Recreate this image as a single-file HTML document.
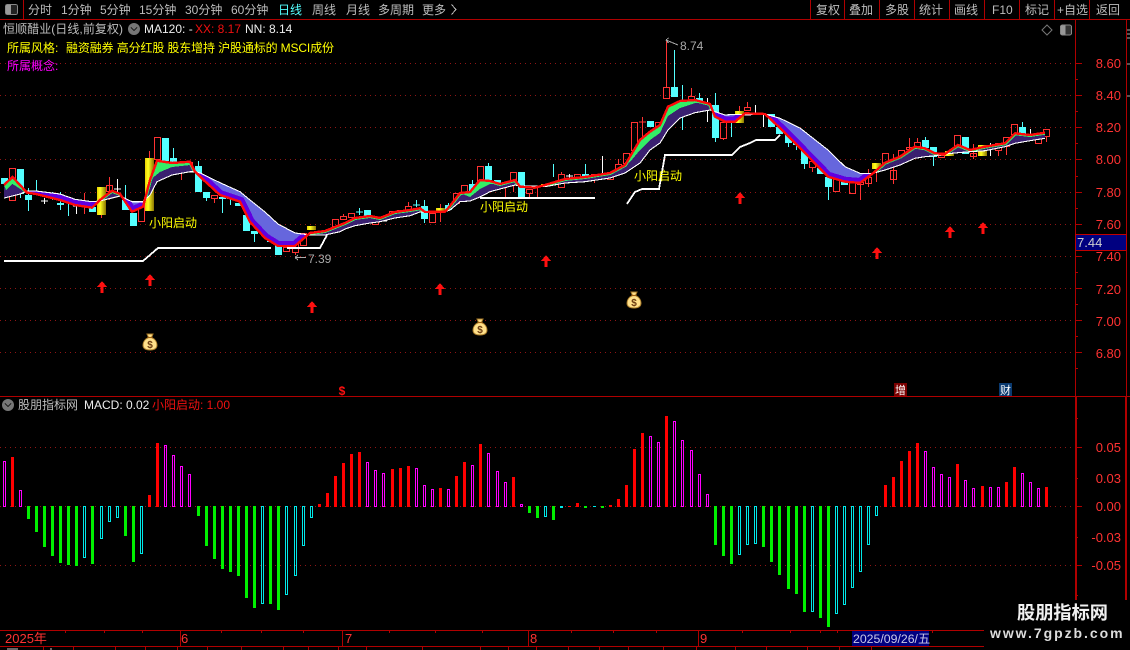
<!DOCTYPE html>
<html lang="zh">
<head>
<meta charset="utf-8">
<title>恒顺醋业</title>
<style>
html,body{margin:0;padding:0;background:#000;width:1130px;height:650px;overflow:hidden}
svg{display:block}
text{font-family:"Liberation Sans","Noto Sans CJK SC",sans-serif;font-size:12px}
.tb{fill:#bdbdbd}
.ax{fill:#ff3232;text-anchor:end;font-size:13px}
.lb{fill:#ffff00;font-size:12px}
.s{font-size:12px}
</style>
</head>
<body>
<svg width="1130" height="650" viewBox="0 0 1130 650" xmlns="http://www.w3.org/2000/svg" shape-rendering="crispEdges">
<defs>
<linearGradient id="yg" x1="0" x2="1" y1="0" y2="0"><stop offset="0" stop-color="#e8d000"/><stop offset=".35" stop-color="#ffff20"/><stop offset="1" stop-color="#8a7400"/></linearGradient>
<clipPath id="p"><polygon points="4,185 12.5,177 20,185 27,192.7 36,194 60,200 75,205 92,207.7 100,200 112,190.7 120,194 132,211.7 143,206.7 150,180 157,160.7 172,163 190,161.7 195,171.7 200,176.7 220,195 240,201.7 250,222 265,238 278,246 295,246 310,233 325,231 340,225 345,223 355,218 370,216 380,218 395,212 410,210 420,208.3 425,212 445,211.7 450,206 460,193 470,192 480,180 490,181 500,184 515,180 520,186.7 535,187.7 545,185 565,179 585,177 610,173 625,165 640,140 650,131.7 660,125 668,106.7 680,101 695,100 710,104 715,116.7 725,121.7 735,121.7 745,113.3 765,114 780,128 800,148 828,176.7 845,181.7 860,183 873,173.3 885,162.7 900,156.7 915,146.7 925,148.3 935,153.3 945,154 958,145 970,150 985,146.7 1005,143.3 1015,133.3 1030,135 1045,132.7 1045,138.3 1030,140.7 1015,143.3 1005,146.7 985,150.7 970,151.7 958,152.7 945,154 935,155.7 925,156.7 915,158.3 900,165 885,170 873,173.3 860,173.3 845,166.7 828,150 800,128 780,118.3 765,114 745,115 735,114.3 725,115 715,111.7 710,110 695,112.7 680,118 668,130 660,143 650,150 640,163 625,173 610,178 585,181.7 565,183 545,186.7 535,186 520,186 515,185 500,189 490,191.7 480,197 470,201 460,201.7 450,210 445,211.7 425,212 420,212 410,215.7 395,218 380,221.7 370,223 355,225.7 345,229 340,231.7 325,235 310,235 295,233 278,224 265,212 250,200 240,191.7 220,182.7 200,173 195,171.7 190,171.7 172,175 157,181.7 150,195 143,201.7 132,201.7 120,196 112,198 100,201 92,201.7 75,199.3 60,194 36,191 27,191 20,194 12.5,196 4,198"/></clipPath>
<clipPath id="bear"><path d="M27 0H100V400H27zM120 0H146V400H120zM195 0H310V400H195zM425 0H445V400H425zM520 0H545V400H520zM712 0H745V400H712zM765 0H873V400H765z"/></clipPath>
<polyline id="R" fill="none" points="4,185 12.5,177 20,185 27,192.7 36,194 60,200 75,205 92,207.7 100,200 112,190.7 120,194 132,211.7 143,206.7 150,180 157,160.7 172,163 190,161.7 195,171.7 200,176.7 220,195 240,201.7 250,222 265,238 278,246 295,246 310,233 325,231 340,225 345,223 355,218 370,216 380,218 395,212 410,210 420,208.3 425,212 445,211.7 450,206 460,193 470,192 480,180 490,181 500,184 515,180 520,186.7 535,187.7 545,185 565,179 585,177 610,173 625,165 640,140 650,131.7 660,125 668,106.7 680,101 695,100 710,104 715,116.7 725,121.7 735,121.7 745,113.3 765,114 780,128 800,148 828,176.7 845,181.7 860,183 873,173.3 885,162.7 900,156.7 915,146.7 925,148.3 935,153.3 945,154 958,145 970,150 985,146.7 1005,143.3 1015,133.3 1030,135 1045,132.7"/>
<path id="ar" d="M0 0L5 6H1.5V12H-1.5V6H-5z" fill="#ff1010"/>
<g id="bag" shape-rendering="geometricPrecision">
<path d="M-3 0H3L1.5 3.5C5 5 7 8 7 11C7 14.5 4 16 0 16C-4 16 -7 14.5 -7 11C-7 8 -5 5 -1.5 3.5z" fill="#ffe08a" stroke="#a87a28" stroke-width="1"/>
<path d="M-2.5 3.5H2.5" stroke="#a06010" stroke-width="1.2"/>
<text x="0" y="14" text-anchor="middle" style="font-size:10px;font-weight:bold" fill="#6a3a10">$</text>
</g>
</defs>

<rect width="1130" height="650" fill="#000"/>

<!-- grid -->
<path d="M0 63.5H1075M0 95.5H1075M0 127.5H1075M0 159.5H1075M0 192.5H1075M0 224.5H1075M0 256.5H1075M0 288.5H1075M0 320.5H1075M0 352.5H1075M0 447.5H1075M0 506.5H1075M0 565.5H1075" stroke="#8f1515" stroke-width="1" stroke-dasharray="1 4"/>

<!-- candle wicks -->
<g fill="none" stroke-width="1">
<path stroke="#54ffff" d="M20.5 194V198M28.5 188V211M36.5 180V192M52.5 192V200M60.5 192V210M68.5 203V216M125.5 185V200M173.5 148V158M198.5 161V166M206.5 198V201M222.5 199V213M230.5 199V205M254.5 234V242M359.5 208V215M356 212H363M416.5 200V207M413 205H420M424.5 200V223M448.5 203V205M472.5 180V184M488.5 163V166M553.5 164V177M585.5 164V174M674.5 50V87M682.5 85V130M699.5 93V98M715.5 93V142M731.5 122V137M788.5 143V147M796.5 140V150M804.5 164V169M820.5 166V168M828.5 187V200M925.5 137V140M933.5 157V166M1022.5 122V127"/>
<path stroke="#ff3232" d="M84.5 193V214M109.5 177V200M101.5 215V218M149.5 151V158M181.5 165V180M214.5 198V203M295.5 252V255M343.5 214V216M408.5 202V206M440.5 204V222M505.5 187V197M513.5 183V192M529.5 193V197M537.5 188V197M561.5 172V175M594.5 177V183M618.5 159V164M642.5 117V138M639 122H646M666.5 40V87M691.5 88V96M723.5 138V140M739.5 106V111M747.5 102V107M812.5 167V172M860.5 173V200M868.5 169V187M876.5 169V182M893.5 154V184M909.5 138V149M917.5 138V142M973.5 144V159M998.5 150V156M1006.5 146V155M1046.5 136V142M1014.5 134V137"/>
<path stroke="#fff" d="M44.5 198V204M41 201H48M76.5 203V214M73 206H80M117.5 179V192M114 189H121M262.5 230V237M259 233H266M380 221H387M569.5 174V178M566 176H573M602.5 156V175M707.5 98V122M755.5 105V115M763.5 115V127M990.5 143V156M1030.5 129V140"/>
</g>
<!-- cyan bodies -->
<path fill="none" stroke="#54ffff" stroke-width="7" d="M4.5 178V184M20.5 169V194M28.5 195V200M60.5 203V205M92.5 207V212M125.5 200V210M133.5 213V226M165.5 138V161M173.5 158V163M198.5 166V192M206.5 192V198M222.5 197V199M230.5 198V199M238.5 203V206M246.5 215V231M254.5 231V234M270.5 235V242M278.5 243V255M367.5 210V218M424.5 206V219M448.5 205V210M472.5 184V193M488.5 166V180M497.5 180V184M521.5 172V197M585.5 174V177M650.5 121V127M674.5 87V97M682.5 100V103M699.5 98V102M715.5 105V138M771.5 114V127M779.5 127V134M788.5 133V143M796.5 143V145M804.5 150V164M820.5 168V174M828.5 177V187M844.5 182V185M925.5 140V148M933.5 147V157M965.5 137V154M1022.5 127V135"/>
<!-- red hollow -->
<path fill="none" stroke="#ff3232" stroke-width="1" d="M9.5 168.5h6V200.5h-6zM81.5 203.5h6V206.5h-6zM106.5 185.5h6V191.5h-6zM138.5 203.5h6V221.5h-6zM154.5 137.5h6V159.5h-6zM178.5 162.5h6V165.5h-6zM186.5 162.5h6V168.5h-6zM211.5 195.5h6V198.5h-6zM283.5 247.5h6V251.5h-6zM292.5 243.5h6V252.5h-6zM300.5 233.5h6V245.5h-6zM332.5 219.5h6V226.5h-6zM340.5 216.5h6V219.5h-6zM348.5 213.5h6V217.5h-6zM372.5 221.5h6V224.5h-6zM389.5 211.5h6V216.5h-6zM397.5 210.5h6V212.5h-6zM405.5 206.5h6V210.5h-6zM429.5 213.5h6V222.5h-6zM453.5 193.5h6V203.5h-6zM461.5 185.5h6V193.5h-6zM477.5 166.5h6V182.5h-6zM510.5 172.5h6V183.5h-6zM526.5 189.5h6V193.5h-6zM558.5 174.5h6V187.5h-6zM574.5 174.5h6V177.5h-6zM591.5 174.5h6V177.5h-6zM607.5 172.5h6V179.5h-6zM615.5 164.5h6V170.5h-6zM623.5 153.5h6V163.5h-6zM631.5 122.5h6V150.5h-6zM655.5 122.5h6V127.5h-6zM663.5 87.5h6V98.5h-6zM688.5 96.5h6V100.5h-6zM720.5 122.5h6V138.5h-6zM744.5 107.5h6V110.5h-6zM809.5 161.5h6V167.5h-6zM833.5 179.5h6V191.5h-6zM849.5 182.5h6V193.5h-6zM857.5 182.5h6V184.5h-6zM865.5 177.5h6V183.5h-6zM882.5 153.5h6V163.5h-6zM890.5 170.5h6V179.5h-6zM898.5 150.5h6V157.5h-6zM906.5 147.5h6V149.5h-6zM914.5 142.5h6V147.5h-6zM938.5 155.5h6V157.5h-6zM954.5 135.5h6V146.5h-6zM970.5 153.5h6V156.5h-6zM995.5 143.5h6V150.5h-6zM1003.5 137.5h6V146.5h-6zM1011.5 124.5h6V134.5h-6zM1035.5 138.5h6V143.5h-6zM1043.5 129.5h6V136.5h-6z"/>
<!-- yellow bodies -->
<g fill="url(#yg)">
<rect x="97" y="187" width="9" height="28"/>
<rect x="145" y="158" width="9" height="53"/>
<rect x="307" y="226" width="9" height="4"/>
<rect x="436" y="208" width="9" height="3"/>
<rect x="541" y="184" width="9" height="2"/>
<rect x="735" y="111" width="9" height="12"/>
<rect x="872" y="163" width="9" height="6"/>
<rect x="945" y="151" width="9" height="5"/>
<rect x="978" y="145" width="9" height="3"/>
<rect x="978" y="151" width="9" height="5"/>
</g>

<!-- ribbon -->
<g clip-path="url(#p)">
<rect width="1075" height="400" fill="#3a2070"/>
<use href="#R" stroke="#33ee66" stroke-width="4"/>
<g fill="#33ee66">
<polygon points="4,185 12.5,177 20,185 22,190 12.5,184 6,190"/>
<polygon points="150,180 157,160.7 172,163 190,161.7 195,171.7 190,165 172,167 160,172"/>
<polygon points="625,165 640,140 650,131.7 660,125 668,106.7 680,101 695,100 710,104 695,103 680,108 668,116 660,133 650,140 640,150 630,162"/>
<polygon points="460,193 470,192 480,180 490,181 500,184 490,184 480,189 470,197"/>
</g>
<g clip-path="url(#bear)">
<rect width="1075" height="400" fill="#6666dd"/>
<use href="#R" stroke="#6000e0" stroke-width="10"/>
</g>
</g>
<polyline fill="none" stroke="#fff" stroke-width="1.1" points="4,198 12.5,196 20,194 27,191 36,191 60,194 75,199.3 92,201.7 100,201 112,198 120,196 132,201.7 143,201.7 150,195 157,181.7 172,175 190,171.7 195,171.7 200,173 220,182.7 240,191.7 250,200 265,212 278,224 295,233 310,235 325,235 340,231.7 345,229 355,225.7 370,223 380,221.7 395,218 410,215.7 420,212 425,212 445,211.7 450,210 460,201.7 470,201 480,197 490,191.7 500,189 515,185 520,186 535,186 545,186.7 565,183 585,181.7 610,178 625,173 640,163 650,150 660,143 668,130 680,118 695,112.7 710,110 715,111.7 725,115 735,114.3 745,115 765,114 780,118.3 800,128 828,150 845,166.7 860,173.3 873,173.3 885,170 900,165 915,158.3 925,156.7 935,155.7 945,154 958,152.7 970,151.7 985,150.7 1005,146.7 1015,143.3 1030,140.7 1045,138.3"/>
<use href="#R" stroke="#ff0a0a" stroke-width="2.4"/>

<!-- support lines -->
<g fill="none" stroke="#fff" stroke-width="1.8">
<path d="M4 261H143L158 248H271M287 248H320L327 235"/>
<path d="M480 198H595"/>
<path d="M627 204L635 192L642 189H659L665 155H732L740 147L750 143L756 140H775L780 135"/>
</g>

<!-- labels on chart -->
<text class="lb" x="149" y="227">小阳启动</text>
<text class="lb" x="480" y="211">小阳启动</text>
<text class="lb" x="634" y="180">小阳启动</text>
<g fill="none" stroke="#aaa" stroke-width="1"><path d="M666 40L678 45M666 40L668.5 38M666 40L668.5 43"/><path d="M295 257.5H306M295 257.5L298 255M295 257.5L298 260"/></g>
<text x="680" y="50" fill="#aaa">8.74</text>
<text x="308" y="263" fill="#aaa">7.39</text>

<!-- arrows -->
<use href="#ar" x="102" y="281"/><use href="#ar" x="150" y="274"/><use href="#ar" x="312" y="301"/><use href="#ar" x="440" y="283"/><use href="#ar" x="546" y="255"/><use href="#ar" x="740" y="192"/><use href="#ar" x="877" y="247"/><use href="#ar" x="950" y="226"/><use href="#ar" x="983" y="222"/>
<!-- bags -->
<use href="#bag" x="150" y="334"/><use href="#bag" x="480" y="319"/><use href="#bag" x="634" y="292"/>

<!-- MACD -->
<g fill="none" stroke-width="3" stroke="#ff0000">
<path d="M12.5 457V507M149.5 495V507M157.5 443V507M319.5 504V507M327.5 493V507M335.5 476V507M343.5 463V507M351.5 454V507M359.5 452V507M392.5 469V507M400.5 468V507M408.5 466V507M440.5 488V507M456.5 476V507M464.5 462V507M480.5 444V507M513.5 477V507M569.5 506V507M577.5 503V507M610.5 505V507M618.5 499V507M626.5 485V507M634.5 449V507M642.5 433V507M666.5 416V507M885.5 485V507M893.5 477V507M901.5 461V507M909.5 451V507M917.5 443V507M957.5 464V507M982.5 486V507M1006.5 482V507M1014.5 467V507M1046.5 487V507"/>
</g>
<g fill="none" stroke-width="3" stroke="#00f000">
<path d="M28.5 506V519M36.5 506V532M44.5 506V547M52.5 506V556M60.5 506V563M68.5 506V565M76.5 506V566M92.5 506V564M125.5 506V536M133.5 506V562M198.5 506V516M206.5 506V546M214.5 506V559M222.5 506V569M230.5 506V572M238.5 506V576M246.5 506V598M254.5 506V608M270.5 506V604M278.5 506V610M529.5 506V513M537.5 506V518M553.5 506V520M585.5 506V508M602.5 506V508M715.5 506V545M723.5 506V556M731.5 506V564M763.5 506V547M771.5 506V562M779.5 506V575M788.5 506V589M796.5 506V594M804.5 506V612M820.5 506V618M828.5 506V627"/>
<path stroke="#00e8e8" d="M561.5 506V508M594.5 506V507"/>
</g>
<g fill="none" stroke-width="1" stroke="#ff00ff">
<path d="M3.5 461.5h2V506.5h-2zM19.5 490.5h2V506.5h-2zM164.5 445.5h2V506.5h-2zM172.5 455.5h2V506.5h-2zM180.5 466.5h2V506.5h-2zM188.5 474.5h2V506.5h-2zM366.5 462.5h2V506.5h-2zM374.5 470.5h2V506.5h-2zM382.5 473.5h2V506.5h-2zM415.5 468.5h2V506.5h-2zM423.5 485.5h2V506.5h-2zM431.5 489.5h2V506.5h-2zM447.5 489.5h2V506.5h-2zM471.5 465.5h2V506.5h-2zM487.5 453.5h2V506.5h-2zM496.5 471.5h2V506.5h-2zM504.5 482.5h2V506.5h-2zM520.5 504.5h2V506.5h-2zM649.5 436.5h2V506.5h-2zM657.5 442.5h2V506.5h-2zM673.5 421.5h2V506.5h-2zM681.5 440.5h2V506.5h-2zM690.5 450.5h2V506.5h-2zM698.5 474.5h2V506.5h-2zM706.5 494.5h2V506.5h-2zM924.5 451.5h2V506.5h-2zM932.5 467.5h2V506.5h-2zM940.5 474.5h2V506.5h-2zM948.5 477.5h2V506.5h-2zM964.5 480.5h2V506.5h-2zM972.5 488.5h2V506.5h-2zM989.5 487.5h2V506.5h-2zM997.5 487.5h2V506.5h-2zM1021.5 473.5h2V506.5h-2zM1029.5 482.5h2V506.5h-2zM1037.5 488.5h2V506.5h-2z"/>
</g>
<g fill="none" stroke-width="1" stroke="#00e8e8">
<path d="M83.5 506.5h2V557.5h-2zM100.5 506.5h2V538.5h-2zM108.5 506.5h2V521.5h-2zM116.5 506.5h2V517.5h-2zM140.5 506.5h2V553.5h-2zM261.5 506.5h2V603.5h-2zM285.5 506.5h2V594.5h-2zM294.5 506.5h2V575.5h-2zM302.5 506.5h2V545.5h-2zM310.5 506.5h2V517.5h-2zM544.5 506.5h2V516.5h-2zM738.5 506.5h2V554.5h-2zM746.5 506.5h2V544.5h-2zM754.5 506.5h2V543.5h-2zM811.5 506.5h2V611.5h-2zM835.5 506.5h2V613.5h-2zM843.5 506.5h2V604.5h-2zM851.5 506.5h2V587.5h-2zM859.5 506.5h2V571.5h-2zM867.5 506.5h2V544.5h-2zM875.5 506.5h2V515.5h-2z"/>
</g>

<!-- frame lines -->
<g fill="none" stroke="#b00000" stroke-width="1">
<path d="M0 19.5H1130M0 396.5H1130M0 630.5H1130M0 646.5H1130"/>
<path d="M1075.5 20V630M1126.5 20V630"/>
<path d="M23.5 0V19M810.5 0V19M844.5 0V19M879.5 0V19M914.5 0V19M949.5 0V19M984.5 0V19M1019.5 0V19M1054.5 0V19M1089.5 0V19"/>
<path d="M1075 63.5H1082M1075 95.5H1082M1075 127.5H1082M1075 159.5H1082M1075 192.5H1082M1075 224.5H1082M1075 256.5H1082M1075 288.5H1082M1075 320.5H1082M1075 352.5H1082M1075 79.5H1078M1075 111.5H1078M1075 143.5H1078M1075 176.5H1078M1075 208.5H1078M1075 240.5H1078M1075 272.5H1078M1075 304.5H1078M1075 336.5H1078M1075 368.5H1078M1075 447.5H1082M1075 478.5H1078M1075 506.5H1082M1075 537.5H1078M1075 565.5H1082M1075 418.5H1078M1075 595.5H1078"/>
<path d="M180.5 630V646M342.5 630V646M528.5 630V646M698.5 630V646M65.5 630V633M104.5 630V633M142.5 630V633M221.5 630V633M261.5 630V633M303.5 630V633M389.5 630V633M435.5 630V633M482.5 630V633M571.5 630V633M613.5 630V633M656.5 630V633M742.5 630V633M790.5 630V633M820.5 630V633M837.5 630V633M932.5 630V633"/>
<path d="M43.5 646V650M73.5 646V650M115.5 646V650M145.5 646V650M177.5 646V650M207.5 646V650M241.5 646V650M283.5 646V650M308.5 646V650M338.5 646V650M366.5 646V650M422.5 646V650M480.5 646V650M508.5 646V650M536.5 646V650M568.5 646V650M599.5 646V650M628.5 646V650M663.5 646V650M696.5 646V650M735.5 646V650M766.5 646V650M807.5 646V650M839.5 646V650M871.5 646V650"/>
</g>
<path d="M1075 397H1077V630H1075zM1125 397H1127V630H1125z" fill="#b00000"/>
<path d="M1127 30H1130M1127 34H1130M1127 38H1130M1127 64H1130M1127 96H1130" stroke="#aaa" stroke-width="1"/>
<path d="M7 649H18M50 649H52" stroke="#ccc" stroke-width="1"/>

<!-- toolbar -->
<rect x="5.5" y="4.5" width="12" height="10" rx="2" fill="#222" stroke="#888"/><rect x="6" y="5" width="5" height="9" fill="#999"/>
<text class="tb" x="28" y="14">分时</text>
<text class="tb" x="61" y="14">1分钟</text>
<text class="tb" x="100" y="14">5分钟</text>
<text class="tb" x="139" y="14">15分钟</text>
<text class="tb" x="185" y="14">30分钟</text>
<text class="tb" x="231" y="14">60分钟</text>
<text x="278" y="14" fill="#54ffff">日线</text>
<text class="tb" x="312" y="14">周线</text>
<text class="tb" x="346" y="14">月线</text>
<text class="tb" x="378" y="14">多周期</text>
<text class="tb" x="422" y="14">更多</text>
<path d="M451.5 4.5L456 9.5L451.5 14.5" fill="none" stroke="#bdbdbd"/>
<text class="tb" x="816" y="14">复权</text>
<text class="tb" x="849" y="14">叠加</text>
<text class="tb" x="885" y="14">多股</text>
<text class="tb" x="919" y="14">统计</text>
<text class="tb" x="954" y="14">画线</text>
<text class="tb" x="992" y="14">F10</text>
<text class="tb" x="1025" y="14">标记</text>
<text class="tb" x="1057" y="14">+自选</text>
<text class="tb" x="1096" y="14">返回</text>

<!-- title rows -->
<text x="3" y="33" fill="#bdbdbd" textLength="120" lengthAdjust="spacing">恒顺醋业(日线,前复权)</text>
<circle cx="134" cy="29" r="6" fill="#777" shape-rendering="geometricPrecision"/><path d="M131 27.5L134 30.5L137 27.5" fill="none" stroke="#222" stroke-width="1.3"/>
<text x="144" y="33" fill="#eee" class="s">MA120: -</text>
<text x="195" y="33" fill="#f01010" class="s">XX: 8.17</text>
<text x="245" y="33" fill="#eee" class="s">NN: 8.14</text>
<text x="7" y="52" fill="#ffff00" class="s">所属风格:</text>
<text x="66" y="52" fill="#ffff00" class="s" textLength="268" lengthAdjust="spacing">融资融券 高分红股 股东增持 沪股通标的 MSCI成份</text>
<text x="7" y="70" fill="#ff00ff" class="s">所属概念:</text>
<path d="M1047 25L1052 30L1047 35L1042 30z" fill="none" stroke="#777" shape-rendering="geometricPrecision"/>
<rect x="1060.5" y="25" width="11" height="10" rx="2" fill="#333" stroke="#888"/><rect x="1061" y="25.5" width="4.5" height="9" fill="#999"/>

<!-- axis labels -->
<g class="ax">
<text class="ax" x="1121" y="68">8.60</text><text class="ax" x="1121" y="100">8.40</text><text class="ax" x="1121" y="132">8.20</text><text class="ax" x="1121" y="164">8.00</text><text class="ax" x="1121" y="197">7.80</text><text class="ax" x="1121" y="229">7.60</text><text class="ax" x="1121" y="261">7.40</text><text class="ax" x="1121" y="294">7.20</text><text class="ax" x="1121" y="326">7.00</text><text class="ax" x="1121" y="358">6.80</text>
<text class="ax" x="1121" y="452">0.05</text><text class="ax" x="1121" y="483">0.03</text><text class="ax" x="1121" y="511">0.00</text><text class="ax" x="1121" y="542">-0.03</text><text class="ax" x="1121" y="570">-0.05</text>
</g>
<rect x="1075.5" y="234.5" width="51" height="16" fill="#000080" stroke="#c00000"/>
<text x="1077" y="247" fill="#d0d0d0" style="font-size:13px">7.44</text>

<!-- marks -->
<text x="342" y="395" fill="#ff1010" text-anchor="middle" style="font-size:12px;font-weight:bold">$</text>
<rect x="894" y="383" width="13" height="13" fill="#7a0000"/><text x="895" y="394" fill="#fff" style="font-size:11px">增</text>
<rect x="999" y="383" width="13" height="13" fill="#0a3a70"/><text x="1000" y="394" fill="#fff" style="font-size:11px">财</text>

<!-- MACD title -->
<circle cx="8" cy="405" r="6" fill="#777" shape-rendering="geometricPrecision"/><path d="M5 403.5L8 406.5L11 403.5" fill="none" stroke="#222" stroke-width="1.3"/>
<text x="18" y="409" fill="#bdbdbd">股朋指标网</text>
<text x="84" y="409" fill="#eee" class="s">MACD: 0.02</text>
<text x="152" y="409" fill="#f01010" class="s">小阳启动: 1.00</text>

<!-- date axis -->
<text x="5" y="643" fill="#ff3232" style="font-size:13px">2025年</text>
<text x="181" y="643" fill="#ff3232" style="font-size:13px">6</text>
<text x="345" y="643" fill="#ff3232" style="font-size:13px">7</text>
<text x="530" y="643" fill="#ff3232" style="font-size:13px">8</text>
<text x="700" y="643" fill="#ff3232" style="font-size:13px">9</text>
<rect x="852" y="631" width="77" height="15" fill="#000080"/>
<text x="853" y="643" fill="#c8c8e8" style="font-size:12.3px">2025/09/26/五</text>

<!-- watermark -->
<rect x="984" y="600" width="146" height="50" fill="#000"/>
<text x="1017" y="619" fill="#f0f0f0" style="font-size:18.2px;font-weight:bold">股朋指标网</text>
<text x="990" y="638" fill="#dcdcdc" style="font-size:14px;font-weight:bold;letter-spacing:1.95px">www.7gpzb.com</text>
</svg>
</body>
</html>
